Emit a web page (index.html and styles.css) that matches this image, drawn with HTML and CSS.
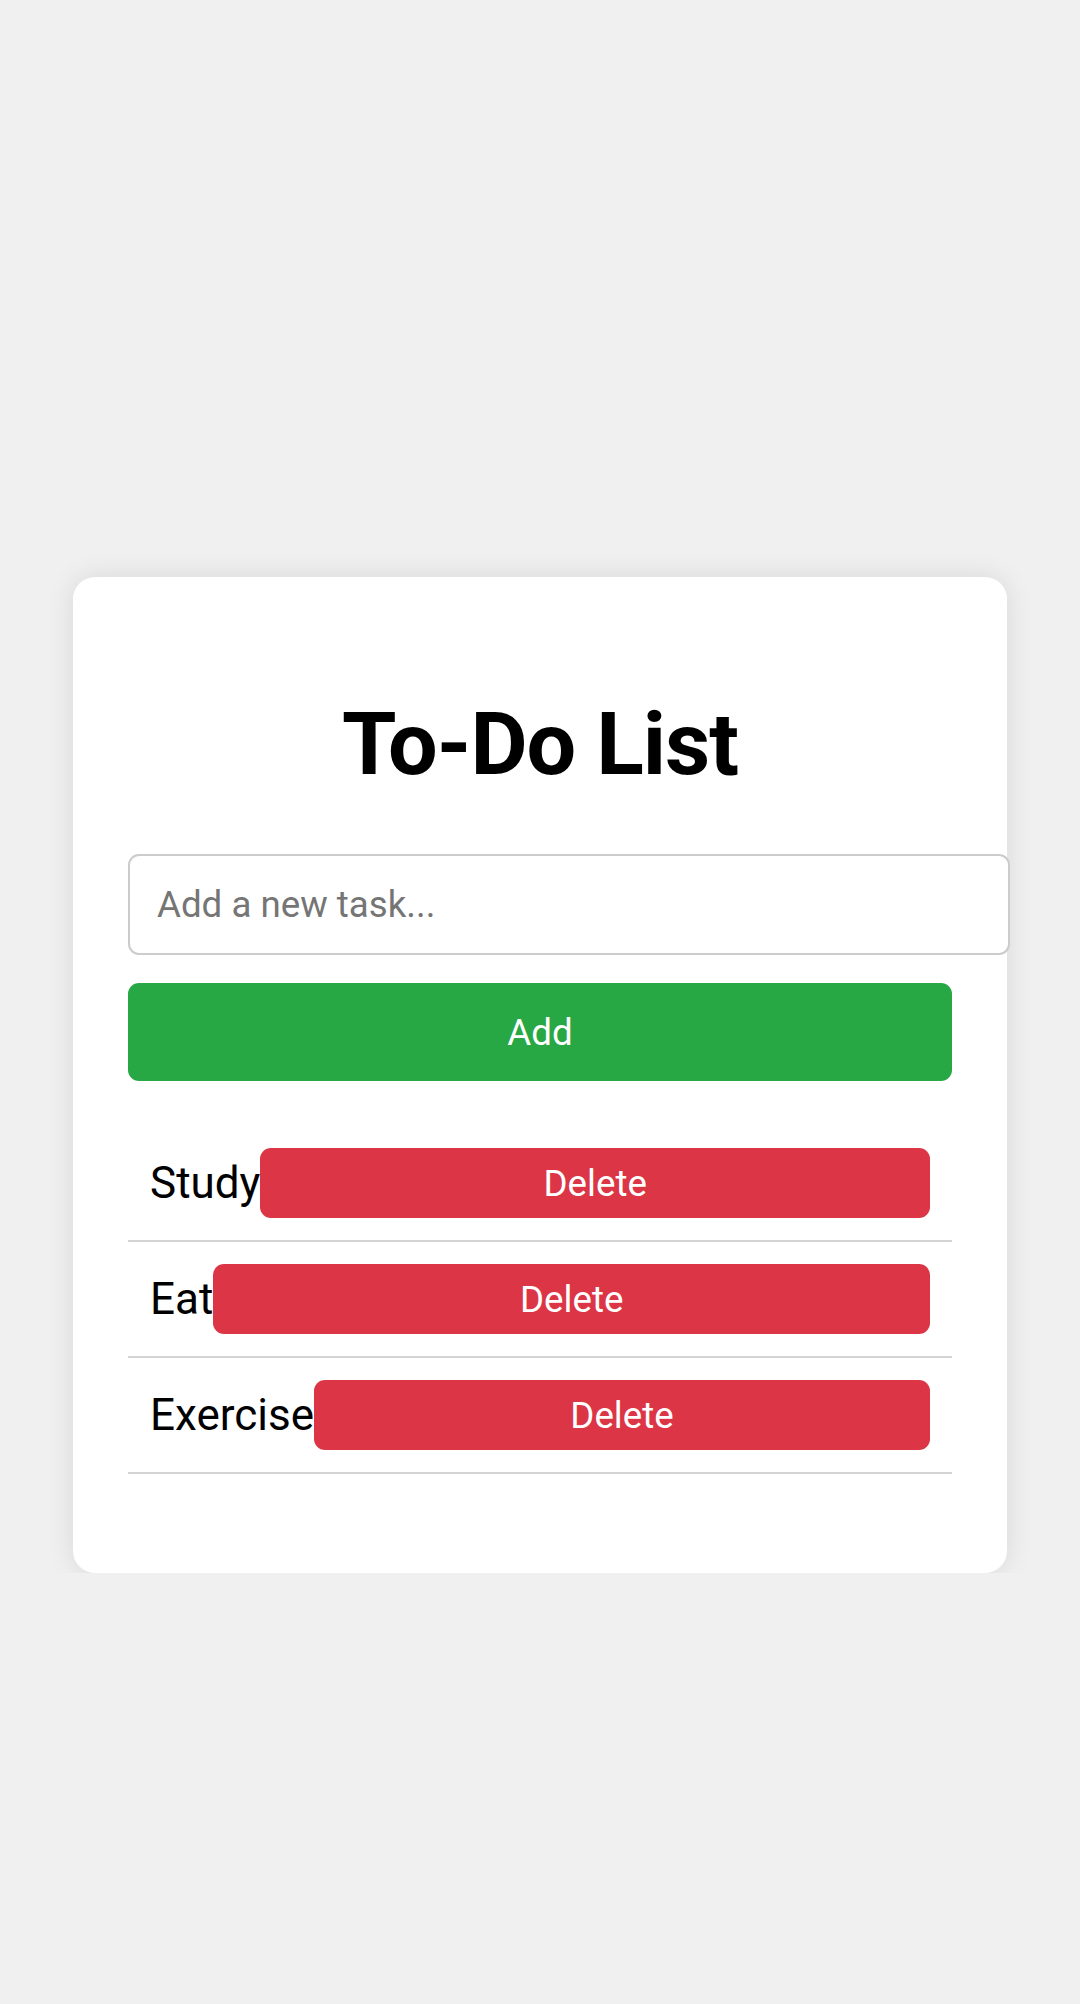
FILE: index.html
```html
<!DOCTYPE html>
<html lang="en">
<head>
<meta charset="utf-8">
<title>To-Do List</title>
<link rel="stylesheet" href="styles.css">
</head>
<body>
<div class="page">
  <div class="card">
    <h1 class="title">To-Do List</h1>
    <input class="task-input" type="text" placeholder="Add a new task...">
    <button class="add-btn">Add</button>
    <ul class="task-list">
      <li class="task"><span class="task-text">Study</span><button class="delete-btn">Delete</button></li>
      <li class="task"><span class="task-text">Eat</span><button class="delete-btn">Delete</button></li>
      <li class="task"><span class="task-text">Exercise</span><button class="delete-btn">Delete</button></li>
    </ul>
  </div>
</div>
</body>
</html>
```

FILE: styles.css
```css
html, body {
  margin: 0;
  padding: 0;
  background: #f0f0f0;
  font-family: Roboto, "Liberation Sans", Arial, sans-serif;
}

.page {
  padding-top: 577px;
}

.card {
  width: 934px;
  box-sizing: border-box;
  margin: 0 auto;
  padding: 55px;
  background: #ffffff;
  border-radius: 22px;
  box-shadow: 0 0 28px rgba(0, 0, 0, 0.1);
}

.title {
  margin: 60px 0 59px 0;
  font-size: 88px;
  line-height: 103px;
  font-weight: 700;
  letter-spacing: -1px;
  text-align: center;
  color: #000;
}

.task-input {
  display: block;
  width: 100%;
  box-sizing: content-box;
  height: 97px;
  padding: 0 27px;
  margin: 0 0 28px 0;
  border: 2px solid #cccccc;
  border-radius: 11px;
  font-family: Roboto, "Liberation Sans", Arial, sans-serif;
  font-size: 36.7px;
  color: #000;
  outline: none;
  background: #fff;
}

.task-input::placeholder {
  color: #757575;
}

.add-btn {
  display: block;
  width: 100%;
  height: 98px;
  margin: 0;
  padding: 0;
  border: none;
  border-radius: 11px;
  background: #28a745;
  color: #fff;
  font-family: Roboto, "Liberation Sans", Arial, sans-serif;
  font-size: 36.7px;
}

.task-list {
  list-style: none;
  margin: 45px 0 44px 0;
  padding: 0;
}

.task {
  display: flex;
  align-items: center;
  padding: 22px;
  border-bottom: 2px solid #d4d4d4;
}

.task-text {
  font-size: 44px;
  color: #000;
  white-space: nowrap;
}

.delete-btn {
  flex: 1;
  height: 70px;
  margin: 0;
  padding: 0;
  border: none;
  border-radius: 11px;
  background: #dc3545;
  color: #fff;
  font-family: Roboto, "Liberation Sans", Arial, sans-serif;
  font-size: 36.7px;
}
```
